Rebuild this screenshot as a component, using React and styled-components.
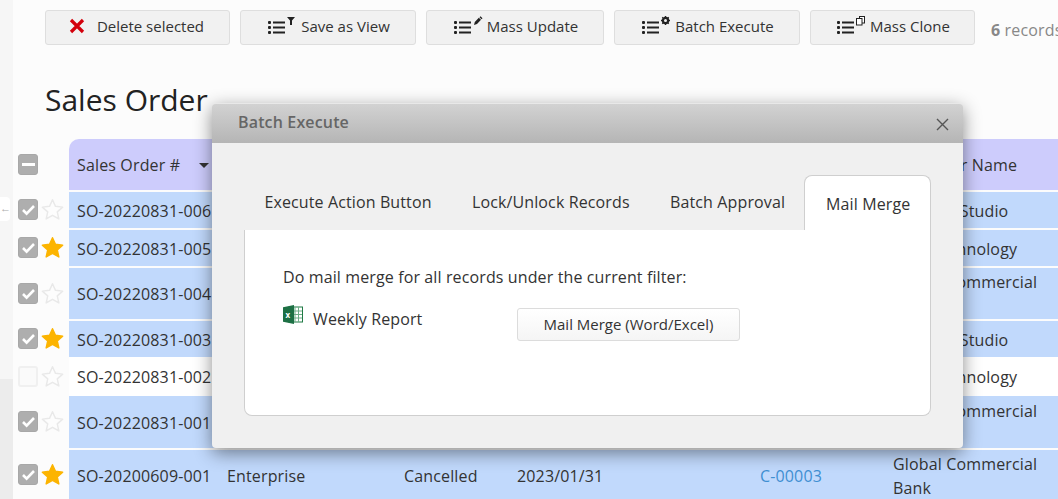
import React from "react";
import styled, { createGlobalStyle } from "styled-components";

const GlobalStyle = createGlobalStyle`
  html, body {
    margin: 0;
    height: 100%;
    overflow: hidden;
    background: #fcfcfc;
  }
  body {
    font-family: "Open Sans", "Liberation Sans", sans-serif;
    font-size: 16px;
    letter-spacing: 0.15px;
    color: #333;
  }
  * {
    box-sizing: border-box;
  }
`;

const ListIcon = ({ children }) => (
  <svg width="30" height="22" viewBox="0 -1 30 22">
    <g fill="#222">
      <rect x="0" y="5" width="3" height="3" rx="1" />
      <rect x="0" y="10" width="3" height="3" rx="1" />
      <rect x="0" y="15" width="3" height="3" rx="1" />
      <rect x="5" y="5.5" width="12" height="2" />
      <rect x="5" y="10.5" width="12" height="2" />
      <rect x="5" y="15.5" width="12" height="2" />
    </g>
    {children}
  </svg>
);

const FilterMark = () => (
  <path d="M19 1h8l-3 3.5V9h-2V4.5z" fill="#222" />
);
const PencilMark = () => (
  <path d="M20 9l.8-3 4-4.2 2.2 2-4 4.3zM25.5 1.2l1-1 2 2-1 1z" fill="#222" />
);
const GearMark = () => (
  <g>
    <circle cx="23.5" cy="4.5" r="2.6" fill="none" stroke="#222" strokeWidth="2.2" />
    <path d="M23.5 0v1.5M23.5 7.5V9M19 4.5h1.5M26.5 4.5H28M20.3 1.3l1.1 1.1M25.6 6.6l1.1 1.1M26.7 1.3l-1.1 1.1M21.4 6.6l-1.1 1.1" stroke="#222" strokeWidth="1.4" />
  </g>
);
const CloneMark = () => (
  <g fill="#fff" stroke="#222" strokeWidth="1">
    <rect x="22.5" y="0.5" width="5" height="6.5" />
    <rect x="19.5" y="2.5" width="5.5" height="6.5" />
  </g>
);

const DeleteIcon = () => (
  <svg width="16" height="16" viewBox="0 0 16 16">
    <path d="M2 2L14 14M14 2L2 14" stroke="#d3000c" strokeWidth="3.2" />
  </svg>
);

const Star = ({ filled }) => (
  <svg width="23" height="23" viewBox="0 0 24 24">
    <path
      d="M12 1.8l3.1 6.9 7.5.8-5.6 5 1.6 7.4-6.6-3.8-6.6 3.8 1.6-7.4-5.6-5 7.5-.8z"
      fill={filled ? "#fcb400" : "#fdfdfd"}
      stroke={filled ? "#fcb400" : "#e9e9e9"}
      strokeWidth="1.5"
      strokeLinejoin="round"
    />
  </svg>
);

const ExcelIcon = () => (
  <svg width="20" height="19" viewBox="0 0 20 19">
    <rect x="6" y="2" width="13.5" height="15" fill="#fff" stroke="#1f7a45" />
    <path d="M12 2v15M6 6h13M6 9.5h13M6 13h13M15.5 2v15" stroke="#6fae88" strokeWidth="1" />
    <path d="M0 2.2L11 0v19L0 16.8z" fill="#1d7044" />
    <text x="2.6" y="12.6" fontSize="8" fontWeight="700" fill="#fff" fontFamily="Open Sans">x</text>
  </svg>
);

const Page = styled.div`
  display: flex;
  width: 1058px;
  height: 499px;
  overflow: hidden;
  position: relative;
`;

const SideRail = styled.aside`
  flex: 0 0 13px;
  display: flex;
  flex-direction: column;
  background: linear-gradient(#f6f6f6 379px, #ececec 379px);
`;

const RailHandle = styled.div`
  width: 10px;
  height: 24px;
  margin-top: 197px;
  background: #fff;
  border-radius: 0 4px 4px 0;
  color: #aaa;
  font-size: 11px;
  line-height: 22px;
  overflow: hidden;
`;

const Main = styled.main`
  flex: 1;
  min-width: 0;
  padding: 10px 0 0 5px;
`;

const Toolbar = styled.div`
  display: flex;
  align-items: center;
  gap: 10px;
  margin-left: 27px;
  white-space: nowrap;
`;

const ToolButton = styled.button`
  flex: 0 0 ${(p) => p.$width}px;
  height: 35px;
  display: flex;
  align-items: center;
  justify-content: center;
  gap: ${(p) => p.$gap || 3}px;
  padding: ${(p) => (p.$danger ? "0 2px 4px 0" : "0 0 4px 2px")};
  font: inherit;
  font-size: 15px;
  letter-spacing: 0;
  color: #333;
  background: #f1f1f1;
  border: 1px solid #dedede;
  border-radius: 3px;
`;

const RecordCount = styled.span`
  margin-left: 6px;
  padding-top: 4px;
  color: #888;
  b {
    font-weight: 700;
  }
`;

const Title = styled.h1`
  margin: 34px 0 0 27px;
  height: 60px;
  font-size: 30px;
  font-weight: 400;
  letter-spacing: 0;
  line-height: 42px;
  color: #222;
`;

const Table = styled.div`
  display: flex;
  flex-direction: column;
`;

const Row = styled.div`
  display: flex;
  height: ${(p) => p.$height}px;
  margin-bottom: ${(p) => p.$gap ?? 2}px;
`;

const Marks = styled.div`
  flex: 0 0 51px;
  display: flex;
  align-items: center;
  gap: 3px;
  padding-bottom: 1px;
`;

const Check = styled.span`
  flex: 0 0 20px;
  height: 21px;
  display: flex;
  align-items: center;
  justify-content: center;
  border-radius: 3px;
  background: ${(p) => (p.$empty ? "#fafafa" : "#aeaeae")};
  border: ${(p) => (p.$empty ? "2px solid #f0f0f0" : "1px solid #a8a8a8")};
`;

const Cells = styled.div`
  flex: 1;
  display: grid;
  grid-template-columns: 150px 177px 113px 243px 133px 1fr;
  align-items: center;
  padding-top: 1px;
  background: ${(p) => (p.$head ? "#cdccfc" : p.$plain ? "#fff" : "#c1d9fc")};
  border-top-left-radius: ${(p) => (p.$head ? "10px" : "0")};
`;

const Cell = styled.div`
  padding-left: 8px;
  line-height: 24px;
  white-space: ${(p) => (p.$wrap ? "normal" : "nowrap")};
  overflow: hidden;
`;

const SortCell = styled(Cell)`
  display: flex;
  align-items: center;
  justify-content: space-between;
  padding-right: 10px;
  &::after {
    content: "";
    border-left: 5.5px solid transparent;
    border-right: 5.5px solid transparent;
    border-top: 5px solid #333;
  }
`;

const RecordLink = styled.a`
  color: #3f8fd2;
`;

const Modal = styled.section`
  position: absolute;
  left: 212px;
  top: 103px;
  width: 751px;
  height: 345px;
  background: #f0f0f0;
  border-radius: 4px;
  box-shadow: 0 5px 18px rgba(0, 0, 0, 0.45);
  display: flex;
  flex-direction: column;
`;

const ModalHeader = styled.header`
  flex: 0 0 40px;
  display: flex;
  align-items: center;
  justify-content: space-between;
  padding: 0 14px 3px 26px;
  border-top: 1px solid #e8e8e8;
  border-radius: 4px 4px 0 0;
  background: linear-gradient(#d2d2d2, #b5b5b5);
`;

const ModalTitle = styled.h2`
  margin: 0;
  font-size: 16px;
  font-weight: 600;
  color: #666;
`;

const CloseIcon = styled.svg`
  width: 13px;
  height: 13px;
  margin-top: 4px;
`;

const ModalBody = styled.div`
  flex: 1;
  padding: 32px;
  display: flex;
  flex-direction: column;
  letter-spacing: 0.12px;
`;

const Tabs = styled.div`
  display: flex;
  height: 55px;
  white-space: nowrap;
`;

const Tab = styled.div`
  padding: ${(p) => (p.$active ? "16px 20px 0 21px" : "15px 20px 0 20.4px")};
  margin-left: ${(p) => (p.$active ? "-1px" : "0")};
  line-height: 24px;
  color: #333;
  background: ${(p) => (p.$active ? "#fff" : "transparent")};
  border: ${(p) => (p.$active ? "1px solid #cfcfcf" : "none")};
  border-bottom: none;
  border-radius: ${(p) => (p.$active ? "8px 8px 0 0" : "0")};
`;

const Panel = styled.div`
  flex: 1;
  padding: 35px 38px;
  background: #fff;
  border: 1px solid #cfcfcf;
  border-top: none;
  border-radius: 0 0 8px 8px;
`;

const PanelText = styled.p`
  margin: 0 0 17px;
  line-height: 24px;
`;

const ReportRow = styled.div`
  display: flex;
  align-items: flex-start;
`;

const ReportName = styled.div`
  display: flex;
  align-items: flex-start;
  flex: 0 0 234px;
  gap: 10px;
  line-height: 24px;
  svg {
    margin-top: -1px;
  }
  span {
    margin-top: 1px;
  }
`;

const MergeButton = styled.button`
  width: 223px;
  height: 33px;
  margin-top: 2px;
  padding: 0 0 2px;
  font: inherit;
  font-size: 15px;
  letter-spacing: 0;
  color: #333;
  background: linear-gradient(#fff, #f5f5f5);
  border: 1px solid #dcdcdc;
  border-radius: 3px;
`;

const tick = (
  <svg width="15" height="13" viewBox="0 0 15 13">
    <path d="M2 7l3.6 3.6L13 3" fill="none" stroke="#fff" strokeWidth="2.6" />
  </svg>
);

const dash = (
  <svg width="13" height="13" viewBox="0 0 13 13">
    <rect x="0" y="5" width="13" height="3" fill="#fff" />
  </svg>
);

const rows = [
  { id: "SO-20220831-006", height: 36, customer: "Creative Studio" },
  { id: "SO-20220831-005", height: 36, customer: "Best Technology", star: true },
  { id: "SO-20220831-004", height: 51, customer: "Global Commercial Bank", wrap: true },
  { id: "SO-20220831-003", height: 36, customer: "Creative Studio", star: true, gap: 0 },
  { id: "SO-20220831-002", height: 39, customer: "Best Technology", plain: true, gap: 0 },
  { id: "SO-20220831-001", height: 52, customer: "Global Commercial Bank", wrap: true, gap: 2 },
  {
    id: "SO-20200609-001",
    height: 50,
    customer: "Global Commercial Bank",
    wrap: true,
    star: true,
    edition: "Enterprise",
    status: "Cancelled",
    date: "2023/01/31",
    link: "C-00003",
  },
];

const App = () => {
  return (
    <Page>
      <GlobalStyle />
      <SideRail>
        <RailHandle>←</RailHandle>
      </SideRail>
      <Main>
        <Toolbar>
          <ToolButton $width={185} $gap={12} $danger>
            <DeleteIcon />
            Delete selected
          </ToolButton>
          <ToolButton $width={176}>
            <ListIcon><FilterMark /></ListIcon>
            Save as View
          </ToolButton>
          <ToolButton $width={178}>
            <ListIcon><PencilMark /></ListIcon>
            Mass Update
          </ToolButton>
          <ToolButton $width={186}>
            <ListIcon><GearMark /></ListIcon>
            Batch Execute
          </ToolButton>
          <ToolButton $width={165}>
            <ListIcon><CloneMark /></ListIcon>
            Mass Clone
          </ToolButton>
          <RecordCount>
            <b>6</b> records
          </RecordCount>
        </Toolbar>
        <Title>Sales Order</Title>
        <Table>
          <Row $height={51}>
            <Marks>
              <Check>{dash}</Check>
            </Marks>
            <Cells $head>
              <SortCell>Sales Order #</SortCell>
              <Cell />
              <Cell />
              <Cell />
              <Cell />
              <Cell>Customer Name</Cell>
            </Cells>
          </Row>
          {rows.map((row) => (
            <Row key={row.id} $height={row.height} $gap={row.gap}>
              <Marks>
                <Check $empty={row.plain}>{!row.plain && tick}</Check>
                <Star filled={row.star} />
              </Marks>
              <Cells $plain={row.plain}>
                <Cell>{row.id}</Cell>
                <Cell>{row.edition}</Cell>
                <Cell>{row.status}</Cell>
                <Cell>{row.date}</Cell>
                <Cell>{row.link && <RecordLink>{row.link}</RecordLink>}</Cell>
                <Cell $wrap={row.wrap}>{row.customer}</Cell>
              </Cells>
            </Row>
          ))}
        </Table>
      </Main>
      <Modal>
        <ModalHeader>
          <ModalTitle>Batch Execute</ModalTitle>
          <CloseIcon viewBox="0 0 13 13">
            <path d="M1 1l11 11M12 1L1 12" stroke="#555" strokeWidth="1.4" />
          </CloseIcon>
        </ModalHeader>
        <ModalBody>
          <Tabs>
            <Tab>Execute Action Button</Tab>
            <Tab>Lock/Unlock Records</Tab>
            <Tab>Batch Approval</Tab>
            <Tab $active>Mail Merge</Tab>
          </Tabs>
          <Panel>
            <PanelText>Do mail merge for all records under the current filter:</PanelText>
            <ReportRow>
              <ReportName>
                <ExcelIcon />
                <span>Weekly Report</span>
              </ReportName>
              <MergeButton>Mail Merge (Word/Excel)</MergeButton>
            </ReportRow>
          </Panel>
        </ModalBody>
      </Modal>
    </Page>
  );
};

export default App;
